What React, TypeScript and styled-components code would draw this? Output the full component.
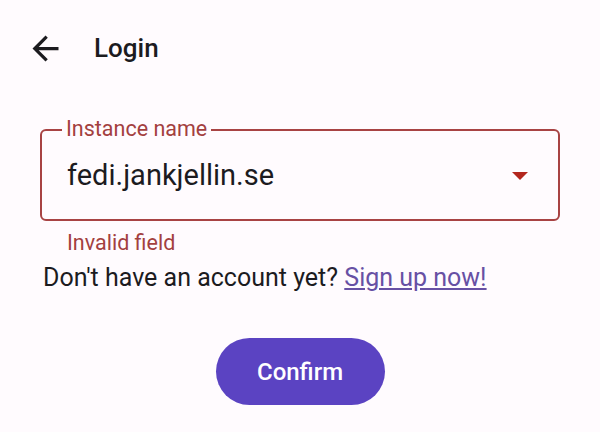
import styled, { createGlobalStyle } from 'styled-components';

const GlobalStyle = createGlobalStyle`
    body {
        margin: 0;
        background: #fffbfe;
        font-family: Roboto, "Liberation Sans", sans-serif;
        color: #1c1b1f;
    }
`;

const Page = styled.div`
    width: 600px;
    height: 432px;
    display: flex;
    flex-direction: column;
    background: #fffbfe;
`;

const Header = styled.header`
    height: 96px;
    display: flex;
    align-items: center;
    padding-left: 26px;
    gap: 29px;
`;

const BackButton = styled.button`
    border: none;
    background: none;
    padding: 0;
    display: flex;
    color: #1c1b1f;
    cursor: pointer;
`;

const Title = styled.h1`
    margin: 0;
    font-size: 26px;
    line-height: 30px;
    font-weight: 500;
`;

const Field = styled.div`
    position: relative;
    margin: 33px 40px 0;
    height: 92px;
    box-sizing: border-box;
    border: 2px solid #a84343;
    border-radius: 6px;
    display: flex;
    align-items: center;
    padding: 0 30px 0 25px;
`;

const FieldLabel = styled.span`
    position: absolute;
    top: -14px;
    left: 20px;
    padding: 0 4px;
    background: #fffbfe;
    color: #a3403f;
    font-size: 21.5px;
    line-height: 24px;
`;

const Value = styled.span`
    flex: 1;
    font-size: 29px;
    line-height: 34px;
    color: #1c1b1f;
`;

const Caret = styled.span`
    width: 0;
    height: 0;
    border-left: 8px solid transparent;
    border-right: 8px solid transparent;
    border-top: 8px solid #b3261e;
    margin-top: 2px;
`;

const Helper = styled.div`
    margin: 10px 0 0 67px;
    font-size: 21.5px;
    line-height: 24px;
    color: #a3403f;
`;

const SignUpRow = styled.p`
    margin: 9px 0 0 43px;
    font-size: 25px;
    line-height: 28px;
`;

const SignUpLink = styled.a`
    color: #6750a4;
    text-decoration: underline;
    cursor: pointer;
`;

const Confirm = styled.button`
    align-self: center;
    margin-top: 46px;
    width: 169px;
    height: 67px;
    border: none;
    border-radius: 34px;
    background: #5b43c2;
    color: #ffffff;
    font-family: Roboto, "Liberation Sans", sans-serif;
    font-size: 24px;
    font-weight: 500;
    cursor: pointer;
`;

function App() {
    return (
        <Page>
            <GlobalStyle />
            <Header>
                <BackButton aria-label="Back">
                    <svg width="39" height="39" viewBox="0 0 24 24" fill="currentColor">
                        <path d="M20 11H7.83l5.59-5.59L12 4l-8 8 8 8 1.41-1.41L7.83 13H20v-2z" />
                    </svg>
                </BackButton>
                <Title>Login</Title>
            </Header>
            <Field>
                <FieldLabel>Instance name</FieldLabel>
                <Value>fedi.jankjellin.se</Value>
                <Caret />
            </Field>
            <Helper>Invalid field</Helper>
            <SignUpRow>
                Don't have an account yet? <SignUpLink>Sign up now!</SignUpLink>
            </SignUpRow>
            <Confirm>Confirm</Confirm>
        </Page>
    );
}

export default App;
